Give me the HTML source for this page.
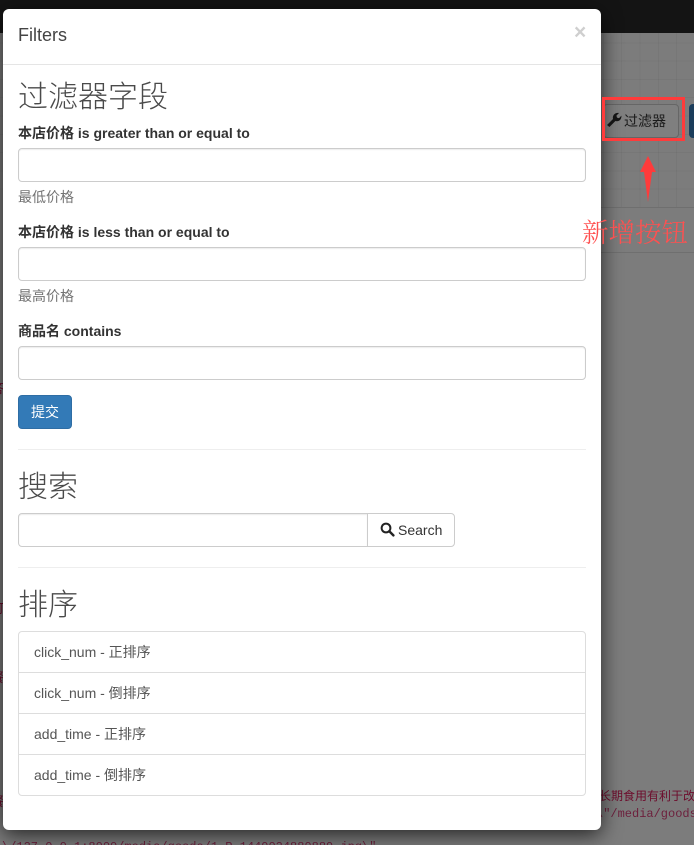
<!DOCTYPE html>
<html><head><meta charset="utf-8">
<style>
html,body{margin:0;padding:0;width:694px;height:845px;overflow:hidden}
body{font-family:"Liberation Sans","Noto Sans CJK SC",sans-serif;font-size:14px;color:#333}
#w{position:absolute;left:0;top:0;width:694px;height:845px;overflow:hidden;background:#7b7b7b}
.a{position:absolute}
.t{position:absolute;white-space:nowrap}
.inp{position:absolute;box-sizing:border-box;background:#fff;border:1px solid #ccc;border-radius:4px;box-shadow:inset 0 1px 1px rgba(0,0,0,.075)}
.h{position:absolute;white-space:nowrap;font-size:30px;line-height:33px;font-weight:300;color:#4a4a4a;font-family:"Liberation Sans","Noto Sans CJK SC",sans-serif}
.l{position:absolute;white-space:nowrap;font-weight:700;font-size:14px;line-height:20px;color:#333}
.hb{position:absolute;white-space:nowrap;font-size:14px;line-height:20px;color:#737373}
.hr{position:absolute;left:15px;width:568px;height:1px;background:#eee}
.li{position:absolute;left:15px;width:568px;box-sizing:border-box;height:42px;border:1px solid #ddd;background:#fff;padding:10px 15px;line-height:20px;color:#555;white-space:nowrap}
.r{position:absolute;white-space:nowrap;color:#6d0c2c;font-size:12px;line-height:16px}
.m{font-family:"Liberation Mono",monospace}
</style></head>
<body>
<div id="w">
<div class="a" style="left:0;top:0;width:694px;height:33px;background:#141414"></div>
<div class="a" style="left:0;top:33px;width:694px;height:812px;background:#7c7c7c"></div>
<div class="a" style="left:0;top:33px;width:694px;height:174px;background-image:repeating-linear-gradient(90deg,transparent 0,transparent 17.3px,rgba(0,0,0,.04) 17.3px,rgba(0,0,0,.04) 18.3px),repeating-linear-gradient(0deg,transparent 0,transparent 17.3px,rgba(0,0,0,.04) 17.3px,rgba(0,0,0,.04) 18.3px)"></div>
<div class="a" style="left:601px;top:207px;width:93px;height:1px;background:#6f6f6f"></div>
<div class="a" style="left:601px;top:252px;width:93px;height:1px;background:#6f6f6f"></div>
<div class="a" style="left:603px;top:104px;width:76px;height:34px;box-sizing:border-box;border:1px solid #666;border-radius:4px;background:#7f7f7f"></div>
<div class="a" style="left:689px;top:104px;width:5px;height:34px;border-radius:4px 0 0 4px;background:#1b3d5b"></div>
<div class="r" style="left:599px;top:788px">长期食用有利于改</div>
<div class="r m" style="left:596px;top:806px;color:#6d1f3c">\"/media/goods/</div>
<div class="r m" style="left:2px;top:826px;height:19px;line-height:43px;overflow:hidden;color:#6d1f3c">\/127.0.0.1:8000/media/goods/1_P_1449024889889.jpg\"</div>
<div class="r" style="left:-9px;top:381px;font-size:13px">答</div>
<div class="r" style="left:-9px;top:601px;font-size:13px">可</div>
<div class="r" style="left:-9px;top:670px;font-size:13px">餐</div>
<div class="r" style="left:-9px;top:794px;font-size:13px">餐</div>

<div class="a" style="left:3px;top:9px;width:598px;height:821px;background:#fff;border-radius:6px;box-shadow:0 5px 20px rgba(0,0,0,.7)">
  <div class="t" style="left:15px;top:16px;font-size:18px;line-height:20px;color:#444">Filters</div>
  <div class="t" style="left:571px;top:13px;font-size:21px;line-height:21px;font-weight:700;color:#cfcfcf">×</div>
  <div class="a" style="left:0;top:55px;width:598px;height:1px;background:#e5e5e5"></div>

  <div class="h" style="left:15px;top:72px">过滤器字段</div>
  <div class="l" style="left:15px;top:114px">本店价格 is greater than or equal to</div>
  <div class="inp" style="left:15px;top:139px;width:568px;height:34px"></div>
  <div class="hb" style="left:15px;top:178px">最低价格</div>

  <div class="l" style="left:15px;top:213px">本店价格 is less than or equal to</div>
  <div class="inp" style="left:15px;top:238px;width:568px;height:34px"></div>
  <div class="hb" style="left:15px;top:277px">最高价格</div>

  <div class="l" style="left:15px;top:312px">商品名 contains</div>
  <div class="inp" style="left:15px;top:337px;width:568px;height:34px"></div>

  <div class="a" style="left:15px;top:386px;width:54px;height:34px;box-sizing:border-box;background:#337ab7;border:1px solid #2e6da4;border-radius:4px;color:#fff;text-align:center;line-height:32px;font-size:14px;font-weight:400">提交</div>

  <div class="hr" style="top:440px"></div>

  <div class="h" style="left:15px;top:462px">搜索</div>
  <div class="a" style="left:15px;top:504px;width:350px;height:34px;box-sizing:border-box;border:1px solid #ccc;border-radius:4px 0 0 4px;box-shadow:inset 0 1px 1px rgba(0,0,0,.075)"></div>
  <div class="a" style="left:364px;top:504px;width:88px;height:34px;box-sizing:border-box;border:1px solid #ccc;border-radius:0 4px 4px 0;background:#fff"></div>
  <svg class="a" style="left:377px;top:513px" width="15" height="15" viewBox="0 0 15 15"><circle cx="6" cy="6" r="4.4" fill="none" stroke="#222" stroke-width="2"/><path d="M9.4 9.4 L13.4 13.4" stroke="#222" stroke-width="2.4" stroke-linecap="round"/></svg>
  <div class="t" style="left:395px;top:511px;line-height:20px;color:#333">Search</div>

  <div class="hr" style="top:558px"></div>

  <div class="h" style="left:15px;top:580px">排序</div>
  <div class="li" style="top:622px;border-radius:4px 4px 0 0">click_num - 正排序</div>
  <div class="li" style="top:663px">click_num - 倒排序</div>
  <div class="li" style="top:704px">add_time - 正排序</div>
  <div class="li" style="top:745px;border-radius:0 0 4px 4px">add_time - 倒排序</div>
</div>

<svg class="a" style="left:606px;top:111px" width="16" height="16" viewBox="0 0 16 16"><path d="M1 14 L7 8 C6.2 4.8 8.6 1.4 13 2 L10.4 4.6 L11 6.6 L13 7.2 L15.4 4.6 C15.8 8.6 12.6 11 9.4 10 L3.4 16 Z" fill="#141414"/></svg>
<div class="t" style="left:624px;top:111px;font-size:14px;line-height:20px;color:#1a1a1a">过滤器</div>
<div class="a" style="left:602px;top:97px;width:83px;height:44px;box-sizing:border-box;border:3px solid #ff3b3b"></div>
<svg class="a" style="left:638px;top:154px" width="20" height="50" viewBox="0 0 20 50"><path d="M10 2 L18 18 L14 18 L10 48 L6 18 L2 18 Z" fill="#ff3b3b"/></svg>
<div class="t" style="left:582px;top:215px;font-size:26.5px;line-height:36px;color:#ff5050;font-family:'Liberation Serif','Noto Serif CJK SC',serif;font-weight:300">新增按钮</div>
</div>
</body></html>
